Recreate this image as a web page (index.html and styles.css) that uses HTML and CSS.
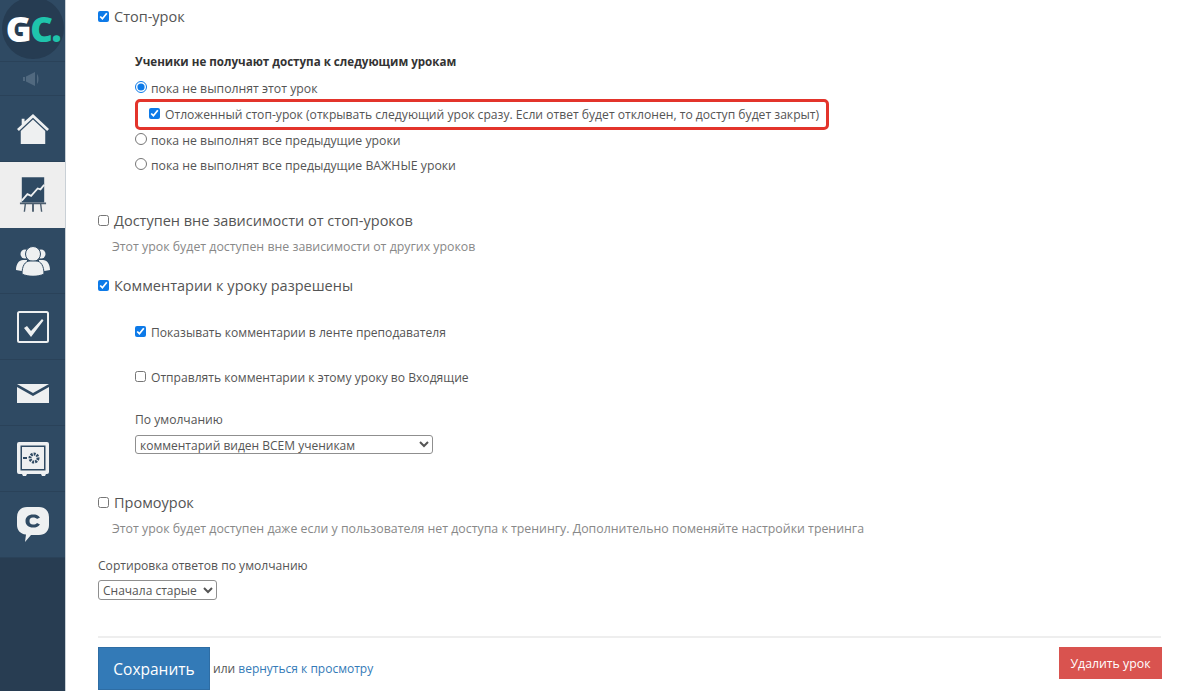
FILE: index.html
```html
<!DOCTYPE html>
<html lang="en">
  <head>
    <meta charset="UTF-8" />
    <title>Настройки урока</title>
    <link rel="stylesheet" href="styles.css">
  </head>
  <body>
    <!-- Sidebar -->
    <div class="sidebar">
      <div class="logo-wrap">
        <div class="logo"><span class="logo-g">G</span><span class="logo-c">C.</span></div>
      </div>
      <div class="menu-item speaker">
        <svg width="22" height="16" viewBox="0 0 22 16"><path d="M1 6h2v4H1zM4 5.500 13 1v14L4 10.500zM15 3c2 2 2 8 0 10z" fill="#51697f"/></svg>
      </div>
      <div class="menu-item">
        <svg width="34" height="32" viewBox="0 0 36 34"><path d="M6 6h3v3l9-8 17 16-2 2L18 5 3 19l-2-2 5-4.500z" fill="#eef0f1"/><path d="M5 19 18 7l13 12v14H5z" fill="#eef0f1"/></svg>
      </div>
      <div class="menu-item active">
        <svg width="28" height="38" viewBox="0 0 30 38"><rect x="3" y="0" width="24" height="27" fill="#2f4a63"/><path d="M3 25l6-7 4 2 7-8 3 1 4-5" fill="none" stroke="#eef0f1" stroke-width="2"/><path d="M1 27h28v2H1zM6 29h1.500l-1 8H5zM14 29h2v8h-2zM22.500 29H24l1 8h-1.500z" fill="#4b5d6e"/></svg>
      </div>
      <div class="menu-item">
        <svg width="34" height="30" viewBox="0 0 34 30"><circle cx="9" cy="8" r="4.500" fill="#eef0f1"/><circle cx="25" cy="8" r="4.500" fill="#eef0f1"/><path d="M0 24c0-6 3-10 7-10h4v12z M34 24c0-6-3-10-7-10h-4v12z" fill="#eef0f1"/><circle cx="17" cy="8" r="7.500" fill="#eef0f1" stroke="#2f4a63"/><path d="M6 28c0-8 3-13 8-13h6c5 0 8 5 8 13-6 3-16 3-22 0z" fill="#eef0f1" stroke="#2f4a63"/></svg>
      </div>
      <div class="menu-item">
        <svg width="32" height="32" viewBox="0 0 32 32"><rect x="1" y="1" width="30" height="30" rx="1.500" fill="none" stroke="#eef0f1" stroke-width="2"/><path d="M7 17l3-2 4 5L25 8l1.500 1.500L14 26z" fill="#eef0f1"/></svg>
      </div>
      <div class="menu-item">
        <svg width="32" height="20" viewBox="0 0 32 20"><path d="M0 1h32L16 10z" fill="#eef0f1"/><path d="M0 4l16 9 16-9v16H0z" fill="#eef0f1"/></svg>
      </div>
      <div class="menu-item">
        <svg width="32" height="34" viewBox="0 0 32 34"><path d="M2 0h28a2 2 0 0 1 2 2v28a2 2 0 0 1-2 2h-1l-1 2h-3l-1-2H10l-1 2H6l-1-2H2a2 2 0 0 1-2-2V2a2 2 0 0 1 2-2z" fill="#eef0f1"/><rect x="3" y="3" width="26" height="26" fill="#2f4a63" stroke="#eef0f1"/><rect x="5" y="5" width="22" height="22" fill="#eef0f1"/><circle cx="17" cy="16" r="4" fill="none" stroke="#2f4a63" stroke-width="3" stroke-dasharray="2 1"/><path d="M6 15h4v2H6z" fill="#2f4a63"/></svg>
      </div>
      <div class="menu-item">
        <svg width="32" height="36" viewBox="0 0 32 36"><path d="M10 0h12c6 0 10 4 10 10v8c0 6-4 10-10 10H14l-6 7 1-7.500C3 27 0 23 0 18v-8C0 4 4 0 10 0z" fill="#eef0f1"/><path d="M23 10.500C21 8 19 7.500 16 7.500c-4.500 0-7.500 2.500-7.500 6.500s3 6.500 7.500 6.500c3 0 5-.5 7-3l-3-1.500c-1 1-2 1.500-4 1.500-2.500 0-3.500-1.500-3.500-3.500s1-3.500 3.500-3.500c2 0 3 .5 4 1.500z" fill="#2f4a63"/></svg>
      </div>
    </div>

    <!-- Lesson settings form -->
    <div class="content">
      <label class="big-check stop-lesson"><input type="checkbox" checked>Стоп-урок</label>

      <div class="sub-block">
        <div class="sub-title">Ученики не получают доступа к следующим урокам</div>
        <label class="option radio-opt"><input type="radio" name="stop" checked>пока не выполнят этот урок</label>
        <label class="option delayed"><input type="checkbox" checked>Отложенный стоп-урок (открывать следующий урок сразу. Если ответ будет отклонен, то доступ будет закрыт)</label>
        <label class="option radio-opt"><input type="radio" name="stop">пока не выполнят все предыдущие уроки</label>
        <label class="option radio-opt"><input type="radio" name="stop">пока не выполнят все предыдущие ВАЖНЫЕ уроки</label>
      </div>

      <label class="big-check any-stop"><input type="checkbox">Доступен вне зависимости от стоп-уроков</label>
      <div class="hint">Этот урок будет доступен вне зависимости от других уроков</div>

      <label class="big-check comments"><input type="checkbox" checked>Комментарии к уроку разрешены</label>
      <div class="sub-block">
        <label class="option comment-opt"><input type="checkbox" checked>Показывать комментарии в ленте преподавателя</label>
        <label class="option comment-opt second"><input type="checkbox">Отправлять комментарии к этому уроку во Входящие</label>
        <div class="field-label">По умолчанию</div>
        <select class="select-wide"><option>комментарий виден ВСЕМ ученикам</option></select>
      </div>

      <label class="big-check promo"><input type="checkbox">Промоурок</label>
      <div class="hint">Этот урок будет доступен даже если у пользователя нет доступа к тренингу. Дополнительно поменяйте настройки тренинга</div>

      <div class="field-label sort-label">Сортировка ответов по умолчанию</div>
      <select class="select-sort"><option>Сначала старые</option></select>

      <div class="form-footer">
        <div class="save-group">
          <button class="btn-save">Сохранить</button>
          <span class="or-text">или <a href="#">вернуться к просмотру</a></span>
        </div>
        <button class="btn-delete">Удалить урок</button>
      </div>
    </div>
  </body>
</html>
```

FILE: styles.css
```css
* {
  margin: 0;
  padding: 0;
  box-sizing: border-box;
}

body {
  font-family: "Open Sans", Arial, sans-serif;
  background-color: #fff;
  color: #555;
  height: 691px;
  overflow: hidden;
  display: flex;
}

/* --- Sidebar --- */
.sidebar {
  width: 66px;
  height: 691px;
  flex-shrink: 0;
  background-color: #283d52;
  border-right: 1px solid #c9d0d6;
}
.logo-wrap {
  height: 62px;
  background-color: #2f4a63;
  overflow: hidden;
  border-bottom: 1px solid #2a4259;
}
.logo {
  width: 62px;
  height: 62px;
  margin: -3px 0 0 2px;
  border-radius: 50%;
  background-color: #263c52;
  text-align: center;
  font-family: "Open Sans", sans-serif;
  font-weight: 800;
  font-size: 35px;
  line-height: 64px;
  letter-spacing: -1.500px;
}
.logo-g {
  color: #fff;
}
.logo-c {
  color: #1fc4ac;
}
.menu-item {
  height: 66px;
  background-color: #2f4a63;
  border-bottom: 1px solid #2a4259;
  display: flex;
  align-items: center;
  justify-content: center;
}
.menu-item.speaker {
  height: 34px;
}
.menu-item.active {
  background-color: #eeeeee;
  border-bottom: none;
}

/* --- Main form --- */
.content {
  flex: 1;
  padding: 0 39px 0 32px;
  font-size: 12.100px;
}
label {
  display: block;
}
input[type="checkbox"],
input[type="radio"] {
  width: 11px;
  height: 11px;
  margin-right: 5px;
  accent-color: #0d7ae8;
}
input[type="radio"] {
  width: 12px;
  height: 12px;
  margin-right: 4px;
}

.big-check {
  font-size: 14.500px;
  line-height: 20px;
}
.stop-lesson {
  margin-top: 7px;
}
.sub-block {
  padding-left: 37px;
}
.sub-title {
  margin-top: 26px;
  margin-bottom: 5px;
  font-size: 11.600px;
  font-weight: bold;
  color: #333;
  line-height: 18px;
}
.option {
  line-height: 25px;
  height: 25px;
}
.radio-opt {
  font-size: 12.250px;
}
.delayed {
  /* red marker drawn around the row */
  border: 3px solid #e3342b;
  border-radius: 5px;
  width: 694px;
  height: 31px;
  line-height: 25px;
  margin-top: -2px;
  margin-bottom: -2px;
  padding-left: 11px;
  font-size: 12.140px;
  white-space: nowrap;
}
.any-stop {
  margin-top: 33px;
}
.hint {
  margin: 7px 0 0 14px;
  font-size: 12.350px;
  line-height: 18px;
  color: #888;
}
.comments {
  margin-top: 20px;
}
.comment-opt {
  margin-top: 24px;
}
.comment-opt.second {
  margin-top: 20px;
}
.field-label {
  margin-top: 21px;
  line-height: 18px;
}
.select-wide {
  display: block;
  width: 298px;
  height: 19px;
  margin-top: 6px;
  font: inherit;
  font-size: 12px;
  color: #555;
  background-color: #fff;
  border: 1px solid #8f8f8f;
  border-radius: 3px;
}
.promo {
  margin-top: 39px;
}
.sort-label {
  margin-top: 19px;
}
.select-sort {
  display: block;
  width: 119px;
  height: 20px;
  margin-top: 5px;
  font: inherit;
  font-size: 12px;
  color: #555;
  background-color: #fff;
  border: 1px solid #8f8f8f;
  border-radius: 3px;
}

/* --- Save / delete row --- */
.form-footer {
  margin-top: 36px;
  border-top: 2px solid #eee;
  padding-top: 9px;
  display: flex;
  justify-content: space-between;
  align-items: flex-start;
}
.save-group {
  display: flex;
  align-items: center;
  gap: 3px;
}
.btn-save {
  width: 112px;
  height: 43px;
  background-color: #337ab7;
  border: 1px solid #2e6da4;
  color: #fff;
  font: inherit;
  font-size: 15.500px;
}
.or-text {
  color: #555;
  font-size: 12px;
}
.or-text a {
  color: #337ab7;
  text-decoration: none;
}
.btn-delete {
  width: 103px;
  height: 32px;
  margin-right: -1px;
  background-color: #d9534f;
  border: 1px solid #d9534f;
  color: #fff;
  font: inherit;
  font-size: 12.300px;
}
```
